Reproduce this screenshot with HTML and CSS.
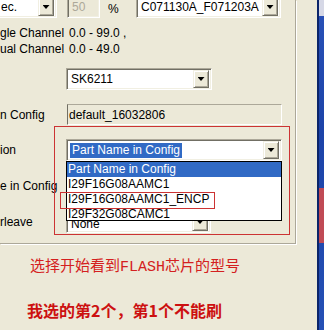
FILE: index.html
```html
<!DOCTYPE html>
<html>
<head>
<meta charset="utf-8">
<link rel="stylesheet" href="styles.css">
</head>
<body>
<div class="screen">
  <div class="dialog">
    <div class="group">
      <div class="toprow">
        <div class="combo combo-ec"><span class="val">ec.</span><span class="btn"><i class="arrow"></i></span></div>
        <div class="edit edit-50">50</div>
        <span class="pct">%</span>
        <div class="combo combo-c07"><span class="val">C071130A_F071203A</span><span class="btn"><i class="arrow"></i></span></div>
      </div>
      <div class="range">
        <div class="rline"><span class="rlbl">gle Channel</span><span>0.0 - 99.0 ,</span></div>
        <div class="rline"><span class="rlbl">ual Channel</span><span>0.0 - 49.0</span></div>
      </div>
      <div class="form">
        <span class="lbl"></span>
        <div class="combo combo-sk"><span class="val">SK6211</span><span class="btn"><i class="arrow"></i></span></div>

        <span class="lbl">n Config</span>
        <div class="field">default_16032806</div>

        <span class="lbl">ion</span>
        <div class="combo combo-part"><span class="val sel">Part Name in Config</span><span class="btn"><i class="arrow"></i></span></div>

        <span class="lbl">e in Config</span>
        <div class="combo combo-part"><span class="val"></span><span class="btn"><i class="arrow"></i></span></div>

        <span class="lbl">rleave</span>
        <div class="combo combo-none"><span class="val">None</span><span class="btn"><i class="arrow"></i></span></div>
      </div>
    </div>
    <div class="notes">
      <p class="note1">选择开始看到<span class="latin">FLASH</span>芯片的型号</p>
      <p class="note2">我选的第2个，第1个不能刷</p>
    </div>
  </div>
  <div class="side"><div class="side-top"></div><div class="side-red"></div></div>

  <div class="redbox"></div>
  <ul class="list">
    <li class="hl">Part Name in Config</li>
    <li>I29F16G08AAMC1</li>
    <li>I29F16G08AAMC1_ENCP</li>
    <li>I29F32G08CAMC1</li>
  </ul>
  <div class="mark"></div>
</div>
</body>
</html>
```

FILE: styles.css
```css
html, body {
  margin: 0;
  padding: 0;
}
body {
  width: 324px;
  height: 330px;
  overflow: hidden;
  background: #ece9d8;
  font-family: "Liberation Sans", Arial, sans-serif;
  font-size: 12px;
  color: #000;
}
.screen {
  position: relative;
  display: flex;
  width: 324px;
  height: 330px;
  overflow: hidden;
}
.dialog {
  width: 317px;
  flex: none;
  display: flex;
  flex-direction: column;
}
.group {
  width: 296px;
  height: 244px;
  box-sizing: border-box;
  border-right: 1px solid #aca899;
  border-bottom: 1px solid #aca899;
  box-shadow: 1px 1px 0 #fff;
  display: flex;
  flex-direction: column;
  flex: none;
}
.toprow {
  display: flex;
  align-items: center;
  height: 22px;
  margin-top: -4px;
}
.combo {
  height: 22px;
  box-sizing: border-box;
  border: 1px solid;
  border-color: #aca899 #fff #fff #aca899;
  box-shadow: inset 1px 1px 0 #716f64, inset -1px -1px 0 #f1efe2;
  background: #fff;
  display: flex;
  align-items: center;
  padding: 2px;
  flex: none;
}
.combo .val {
  flex: 1;
  padding-left: 2px;
  white-space: nowrap;
  overflow: hidden;
  line-height: 15px;
}
.combo .val.sel {
  flex: none;
  background: #316ac5;
  color: #fff;
  margin-left: 1px;
  padding: 0 2px 0 2px;
}
.combo .btn {
  width: 16px;
  height: 18px;
  box-sizing: border-box;
  background: #ece9d8;
  border: 1px solid;
  border-color: #f1efe2 #716f64 #716f64 #f1efe2;
  box-shadow: inset 1px 1px 0 #fff, inset -1px -1px 0 #aca899;
  display: flex;
  align-items: center;
  justify-content: center;
  margin-left: auto;
  flex: none;
}
.arrow {
  display: block;
  width: 7px;
  height: 4px;
  background: #000;
  clip-path: polygon(0 0, 100% 0, 50% 100%);
}
.combo-ec {
  width: 57px;
  border-left: 0;
  padding-left: 0;
  box-shadow: inset 0 1px 0 #716f64, inset -1px -1px 0 #f1efe2;
}
.combo-ec .val { padding-left: 1px; }
.edit {
  height: 22px;
  box-sizing: border-box;
  border: 1px solid;
  border-color: #aca899 #fff #fff #aca899;
  box-shadow: inset 1px 1px 0 #716f64, inset -1px -1px 0 #f1efe2;
  padding: 2px 4px;
  line-height: 16px;
  flex: none;
}
.edit-50 {
  width: 33px;
  margin-left: 10px;
  color: #aca899;
  background: #ece9d8;
}
.pct {
  margin-left: 8px;
  width: 11px;
  padding-top: 4px;
}
.combo-c07 {
  width: 145px;
  margin-left: 17px;
}
.range {
  margin-top: 7px;
  line-height: 16px;
}
.rline {
  display: flex;
  white-space: nowrap;
}
.rlbl {
  width: 69px;
  flex: none;
}
.form {
  margin-top: 11px;
  display: grid;
  grid-template-columns: 66px auto;
  row-gap: 14px;
  align-items: center;
  justify-items: start;
}
.lbl {
  white-space: nowrap;
}
.combo-sk { width: 146px; }
.combo-part { width: 216px; }
.combo-none { width: 145px; }
.combo-none .val { padding-top: 4px; }
.field {
  width: 215px;
  height: 21px;
  box-sizing: border-box;
  margin-left: 1px;
  border-top: 1px solid #aca899;
  border-left: 1px solid #716f64;
  border-right: 1px solid #fff;
  border-bottom: 1px solid #fff;
  padding: 3px 1px 0;
  line-height: 15px;
  background: #ece9d8;
}
.notes {
  flex: 1;
}
.notes p {
  margin: 0;
  color: #d42020;
  font-family: "Noto Sans CJK SC", sans-serif;
  white-space: nowrap;
}
.note1 {
  margin-top: 11px !important;
  padding-left: 30px;
  font-size: 15px;
  line-height: 20px;
}
.note1 .latin {
  font-family: "Liberation Mono", monospace;
  font-size: 15px;
}
.note2 {
  margin-top: 22px !important;
  padding-left: 27px;
  font-size: 16px;
  line-height: 20px;
  font-weight: bold;
  color: #cc1010 !important;
}
.side {
  width: 7px;
  flex: none;
  background: linear-gradient(#2a52b8, #1c43a8 40%, #2550b5);
  border-left: 2px solid #0a246a;
  box-sizing: border-box;
  display: flex;
  flex-direction: column;
}
.side-top {
  height: 16px;
  background: #d6d8e6;
}
.side-red {
  margin-top: 172px;
  height: 55px;
  background: #c04a55;
}
.redbox {
  position: absolute;
  left: 54px;
  top: 126px;
  width: 236px;
  height: 109px;
  box-sizing: border-box;
  border: 1px solid #cc3333;
}
.list {
  position: absolute;
  left: 66px;
  top: 161px;
  width: 216px;
  box-sizing: border-box;
  margin: 0;
  padding: 0;
  list-style: none;
  background: #fff;
  border: 1px solid #000;
}
.list li {
  height: 15px;
  line-height: 15px;
  padding-left: 1px;
  white-space: nowrap;
}
.list li:last-child {
  height: 13px;
}
.list li.hl {
  background: #316ac5;
  color: #fff;
}
.mark {
  position: absolute;
  left: 60px;
  top: 192px;
  width: 155px;
  height: 17px;
  box-sizing: border-box;
  border: 1px solid #cc3333;
}
```
